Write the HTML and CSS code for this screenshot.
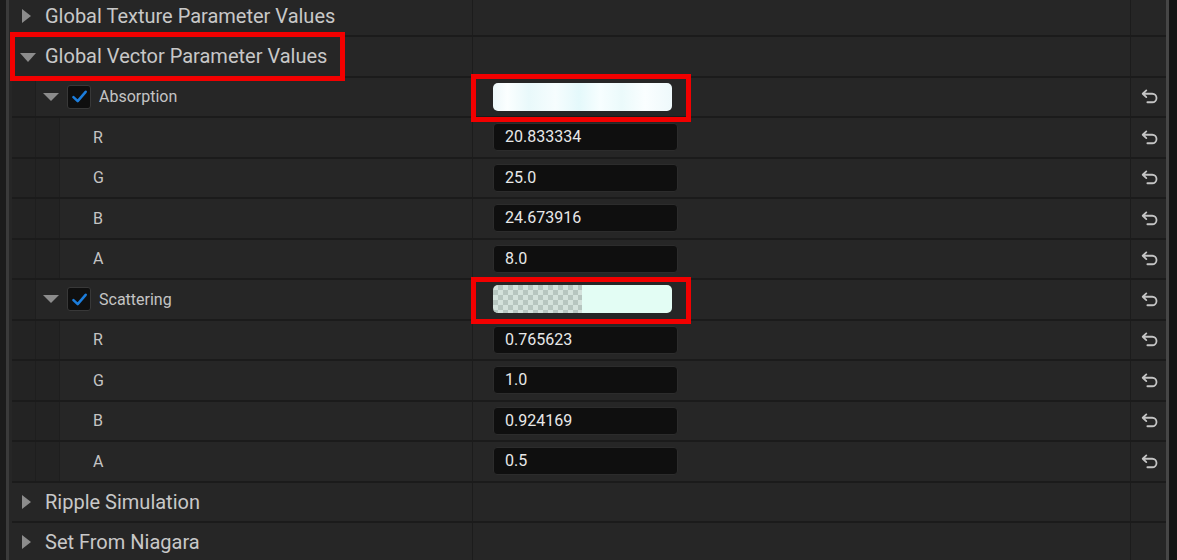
FILE: index.html
```html
<!DOCTYPE html>
<html>
<head>
<meta charset="utf-8">
<link rel="stylesheet" href="styles.css">
</head>
<body>
<div class="frame">
  <div class="edge-dark"></div>
  <div class="edge-line"></div>
  <div class="panel">
    <div class="rows">
      <div class="row first">
        <div class="name head"><span class="tri-right"></span><span class="head-text">Global Texture Parameter Values</span></div>
        <div class="value"></div>
        <div class="reset"></div>
      </div>
      <div class="row">
        <div class="name head"><span class="tri-down big"></span><span class="head-text">Global Vector Parameter Values</span></div>
        <div class="value"></div>
        <div class="reset"></div>
      </div>

      <div class="row">
        <div class="name"><span class="indent"></span><span class="tri-down small"></span><span class="check"><svg viewBox="0 0 16 16" width="17" height="17"><path d="M2.3 8.6 L6.3 12.3 L13.8 3.6" fill="none" stroke="#1c7ddc" stroke-width="2.4" stroke-linecap="round" stroke-linejoin="round"/></svg></span><span class="label">Absorption</span></div>
        <div class="value"><div class="swatch abs"></div></div>
        <div class="reset"><svg class="undo" viewBox="0 0 16 14" width="17" height="15"><path d="M5 1.2 L1.6 4.4 L5 7.6 M1.6 4.4 H10.6 A4 4 0 0 1 10.6 12.4 H6" fill="none" stroke="#c4c4c4" stroke-width="1.7" stroke-linecap="round" stroke-linejoin="round"/></svg></div>
      </div>
      <div class="row">
        <div class="name"><span class="indent"></span><span class="indent"></span><span class="label sub">R</span></div>
        <div class="value"><div class="num">20.833334</div></div>
        <div class="reset"><svg class="undo" viewBox="0 0 16 14" width="17" height="15"><path d="M5 1.2 L1.6 4.4 L5 7.6 M1.6 4.4 H10.6 A4 4 0 0 1 10.6 12.4 H6" fill="none" stroke="#c4c4c4" stroke-width="1.7" stroke-linecap="round" stroke-linejoin="round"/></svg></div>
      </div>
      <div class="row">
        <div class="name"><span class="indent"></span><span class="indent"></span><span class="label sub">G</span></div>
        <div class="value"><div class="num">25.0</div></div>
        <div class="reset"><svg class="undo" viewBox="0 0 16 14" width="17" height="15"><path d="M5 1.2 L1.6 4.4 L5 7.6 M1.6 4.4 H10.6 A4 4 0 0 1 10.6 12.4 H6" fill="none" stroke="#c4c4c4" stroke-width="1.7" stroke-linecap="round" stroke-linejoin="round"/></svg></div>
      </div>
      <div class="row">
        <div class="name"><span class="indent"></span><span class="indent"></span><span class="label sub">B</span></div>
        <div class="value"><div class="num">24.673916</div></div>
        <div class="reset"><svg class="undo" viewBox="0 0 16 14" width="17" height="15"><path d="M5 1.2 L1.6 4.4 L5 7.6 M1.6 4.4 H10.6 A4 4 0 0 1 10.6 12.4 H6" fill="none" stroke="#c4c4c4" stroke-width="1.7" stroke-linecap="round" stroke-linejoin="round"/></svg></div>
      </div>
      <div class="row">
        <div class="name"><span class="indent"></span><span class="indent"></span><span class="label sub">A</span></div>
        <div class="value"><div class="num">8.0</div></div>
        <div class="reset"><svg class="undo" viewBox="0 0 16 14" width="17" height="15"><path d="M5 1.2 L1.6 4.4 L5 7.6 M1.6 4.4 H10.6 A4 4 0 0 1 10.6 12.4 H6" fill="none" stroke="#c4c4c4" stroke-width="1.7" stroke-linecap="round" stroke-linejoin="round"/></svg></div>
      </div>

      <div class="row">
        <div class="name"><span class="indent"></span><span class="tri-down small"></span><span class="check"><svg viewBox="0 0 16 16" width="17" height="17"><path d="M2.3 8.6 L6.3 12.3 L13.8 3.6" fill="none" stroke="#1c7ddc" stroke-width="2.4" stroke-linecap="round" stroke-linejoin="round"/></svg></span><span class="label">Scattering</span></div>
        <div class="value"><div class="swatch scat"><div class="checker"></div><div class="solid"></div></div></div>
        <div class="reset"><svg class="undo" viewBox="0 0 16 14" width="17" height="15"><path d="M5 1.2 L1.6 4.4 L5 7.6 M1.6 4.4 H10.6 A4 4 0 0 1 10.6 12.4 H6" fill="none" stroke="#c4c4c4" stroke-width="1.7" stroke-linecap="round" stroke-linejoin="round"/></svg></div>
      </div>
      <div class="row">
        <div class="name"><span class="indent"></span><span class="indent"></span><span class="label sub">R</span></div>
        <div class="value"><div class="num">0.765623</div></div>
        <div class="reset"><svg class="undo" viewBox="0 0 16 14" width="17" height="15"><path d="M5 1.2 L1.6 4.4 L5 7.6 M1.6 4.4 H10.6 A4 4 0 0 1 10.6 12.4 H6" fill="none" stroke="#c4c4c4" stroke-width="1.7" stroke-linecap="round" stroke-linejoin="round"/></svg></div>
      </div>
      <div class="row">
        <div class="name"><span class="indent"></span><span class="indent"></span><span class="label sub">G</span></div>
        <div class="value"><div class="num">1.0</div></div>
        <div class="reset"><svg class="undo" viewBox="0 0 16 14" width="17" height="15"><path d="M5 1.2 L1.6 4.4 L5 7.6 M1.6 4.4 H10.6 A4 4 0 0 1 10.6 12.4 H6" fill="none" stroke="#c4c4c4" stroke-width="1.7" stroke-linecap="round" stroke-linejoin="round"/></svg></div>
      </div>
      <div class="row">
        <div class="name"><span class="indent"></span><span class="indent"></span><span class="label sub">B</span></div>
        <div class="value"><div class="num">0.924169</div></div>
        <div class="reset"><svg class="undo" viewBox="0 0 16 14" width="17" height="15"><path d="M5 1.2 L1.6 4.4 L5 7.6 M1.6 4.4 H10.6 A4 4 0 0 1 10.6 12.4 H6" fill="none" stroke="#c4c4c4" stroke-width="1.7" stroke-linecap="round" stroke-linejoin="round"/></svg></div>
      </div>
      <div class="row">
        <div class="name"><span class="indent"></span><span class="indent"></span><span class="label sub">A</span></div>
        <div class="value"><div class="num">0.5</div></div>
        <div class="reset"><svg class="undo" viewBox="0 0 16 14" width="17" height="15"><path d="M5 1.2 L1.6 4.4 L5 7.6 M1.6 4.4 H10.6 A4 4 0 0 1 10.6 12.4 H6" fill="none" stroke="#c4c4c4" stroke-width="1.7" stroke-linecap="round" stroke-linejoin="round"/></svg></div>
      </div>

      <div class="row">
        <div class="name head"><span class="tri-right"></span><span class="head-text">Ripple Simulation</span></div>
        <div class="value"></div>
        <div class="reset"></div>
      </div>
      <div class="row">
        <div class="name head"><span class="tri-right"></span><span class="head-text">Set From Niagara</span></div>
        <div class="value"></div>
        <div class="reset"></div>
      </div>
    </div>
  </div>
  <div class="scroll"></div>
  <div class="edge-right"></div>

  <div class="hl hl-group"></div>
  <div class="hl hl-abs"></div>
  <div class="hl hl-scat"></div>
</div>
</body>
</html>
```

FILE: styles.css
```css
html, body {
  margin: 0;
  padding: 0;
  background: #1a1a1a;
  overflow: hidden;
}

.frame {
  position: relative;
  display: flex;
  width: 1177px;
  height: 560px;
  font-family: Roboto, "Noto Sans", sans-serif;
  overflow: hidden;
}

.edge-dark {
  width: 6px;
  background: #1b1b1b;
}

.edge-line {
  width: 3px;
  background: #3a3a3a;
}

.panel {
  flex: 1;
  background: #262626;
  padding-left: 3px;
}

.scroll {
  width: 3px;
  background: #464646;
}

.edge-right {
  width: 8px;
  background: #141414;
}

.rows {
  display: flex;
  flex-direction: column;
}

.row {
  display: flex;
  height: 40.5px;
  box-sizing: border-box;
  border-bottom: 2px solid #1b1b1b;
  background: #262626;
}

.row.first {
  height: 37px;
}

.name {
  width: 461px;
  display: flex;
  align-items: center;
  border-right: 1px solid #1c1c1c;
  box-sizing: border-box;
  height: 100%;
}

.value {
  flex: 1;
  display: flex;
  align-items: center;
  padding-left: 20px;
  border-right: 1px solid #1c1c1c;
}

.reset {
  width: 35px;
  display: flex;
  align-items: center;
  justify-content: center;
  padding-left: 2px;
  box-sizing: border-box;
}

.head {
  padding-left: 10px;
}

.row.first .head {
  padding-bottom: 3px;
  box-sizing: border-box;
}

.head-text {
  font-size: 20px;
  color: #c8c8c8;
}

.tri-right {
  width: 0;
  height: 0;
  border-top: 7px solid transparent;
  border-bottom: 7px solid transparent;
  border-left: 9px solid #8c8c8c;
  margin-right: 14px;
}

.tri-down.big {
  width: 0;
  height: 0;
  border-left: 8px solid transparent;
  border-right: 8px solid transparent;
  border-top: 9px solid #8c8c8c;
  margin-left: -2px;
  margin-right: 9px;
  margin-top: 2px;
}

.tri-down.small {
  width: 0;
  height: 0;
  border-left: 8px solid transparent;
  border-right: 8px solid transparent;
  border-top: 8px solid #8c8c8c;
  margin-left: 7px;
  margin-right: 8px;
}

.indent {
  width: 23px;
  height: 100%;
  background: #232323;
  border-right: 1px solid #1e1e1e;
  flex: none;
}

.check {
  width: 24px;
  height: 24px;
  box-sizing: border-box;
  background: #0f0f0f;
  border: 1px solid #383838;
  border-radius: 3px;
  display: flex;
  align-items: center;
  justify-content: center;
  margin-right: 8px;
}

.label {
  font-size: 16px;
  color: #c4c4c4;
}

.label.sub {
  margin-left: 33px;
}

.num {
  width: 185px;
  height: 28px;
  box-sizing: border-box;
  background: #0f0f0f;
  border: 1px solid #2c2c2c;
  border-radius: 4px;
  color: #e8e8e8;
  font-size: 16px;
  line-height: 26px;
  padding-left: 11px;
}

.swatch {
  width: 179px;
  height: 28px;
  border-radius: 5px;
  overflow: hidden;
}

.swatch.abs {
  background: linear-gradient(90deg, #edf8fa 0%, #fbffff 8%, #e9f9fb 20%, #f6fdfe 35%, #e4f9fb 48%, #f7feff 60%, #ebfafb 72%, #fafeff 85%, #eef9fb 100%);
}

.swatch.scat {
  display: flex;
}

.checker {
  width: 89px;
  height: 100%;
  background-color: #d4e2dc;
  background-image:
    linear-gradient(45deg, #b7c6c0 25%, transparent 25%, transparent 75%, #b7c6c0 75%),
    linear-gradient(45deg, #b7c6c0 25%, transparent 25%, transparent 75%, #b7c6c0 75%);
  background-size: 10px 10px;
  background-position: 0 0, 5px 5px;
}

.solid {
  flex: 1;
  background: #e3fdf4;
}

.undo {
  display: block;
}

.hl {
  position: absolute;
  border: 5px solid #f20000;
  box-sizing: border-box;
  pointer-events: none;
}

.hl-group {
  left: 10px;
  top: 32px;
  width: 335px;
  height: 49px;
}

.hl-abs {
  left: 471px;
  top: 74px;
  width: 220px;
  height: 48px;
}

.hl-scat {
  left: 471px;
  top: 277px;
  width: 220px;
  height: 47px;
}
```
